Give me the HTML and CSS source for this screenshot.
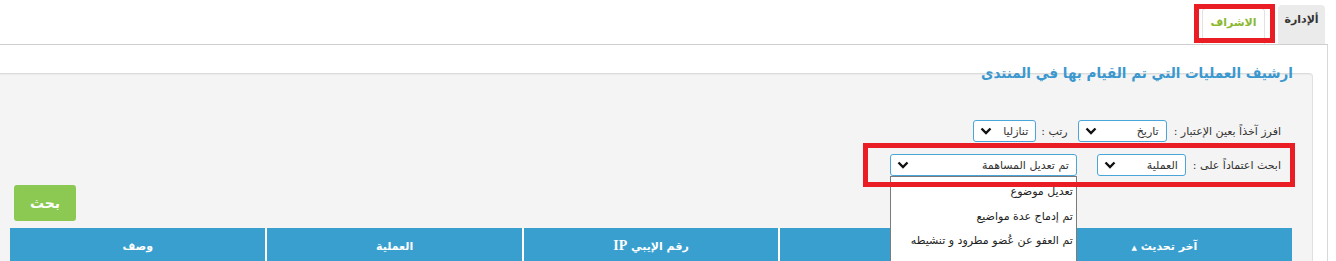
FILE: index.html
```html
<!DOCTYPE html>
<html lang="ar" dir="rtl">
<head>
  <meta charset="UTF-8">
  <title>ارشيف العمليات</title>
  <meta name="viewport" content="width=device-width,initial-scale=1">
  <link rel="stylesheet" href="styles.css">
</head>
<body>
  <!-- Tabs -->
  <div class="tabs">
    <a class="tab">ألإدارة</a>
    <a class="tab active">الاشراف</a>
  </div>

  <div class="main">
    <div class="panel">
      <h2>ارشيف العمليات التي تم القيام بها في المنتدى</h2>

      <div class="filters">
        <div class="row">
          <label>افرز آخذاً بعين الإعتبار :</label>
          <div class="sel w89"><span>تاريخ</span><svg viewBox="0 0 12 8"><path d="M1.5 1.5 6 6 10.5 1.5"/></svg></div>
          <label class="lbl-sort">رتب :</label>
          <div class="sel w63"><span>تنازليا</span><svg viewBox="0 0 12 8"><path d="M1.5 1.5 6 6 10.5 1.5"/></svg></div>
        </div>
        <div class="row marked">
          <label>ابحث اعتماداً على :</label>
          <div class="sel w89"><span>العملية</span><svg viewBox="0 0 12 8"><path d="M1.5 1.5 6 6 10.5 1.5"/></svg></div>
          <div class="sel w187 open">
            <span>تم تعديل المساهمة</span><svg viewBox="0 0 12 8"><path d="M1.5 1.5 6 6 10.5 1.5"/></svg>
            <ul class="options">
              <li>تعديل موضوع</li>
              <li>تم إدماج عدة مواضيع</li>
              <li>تم العفو عن عُضو مطرود و تنشيطه</li>
              <li>تم تعديل المساهمة</li>
            </ul>
          </div>
        </div>
      </div>

      <div class="actions"><button>بحث</button></div>

      <table class="log">
        <thead>
          <tr>
            <th>آخر تحديث <small>▲</small></th>
            <th>العضو</th>
            <th>رقم الإيبي <b>IP</b></th>
            <th>العملية</th>
            <th>وصف</th>
          </tr>
        </thead>
      </table>
    </div>
  </div>
</body>
</html>
```

FILE: styles.css
```css
:root {
  --blue: #389fcf;
  --title: #3b98cf;
  --green: #8bc953;
  --mark: #ea1c24;
  --panel: #f4f4f4;
  --line: #cfcfcf;
}
* { box-sizing: border-box; margin: 0; padding: 0; }
html, body { height: 100%; overflow: hidden; }
body {
  font-family: "DejaVu Sans", sans-serif;
  font-size: 11px; color: #333; background: #fff;
  direction: rtl;
}

/* tabs */
.tabs {
  height: 44px; display: flex; align-items: flex-end;
  padding-right: 11px;
}
.tab {
  display: block; font-weight: bold; font-size: 11px;
  text-align: center; border-radius: 4px 4px 0 0;
}
.tab:first-child {
  width: 47px; height: 39px; line-height: 30px;
  background: #ebebeb; color: #333;
}
.tab.active {
  position: relative;
  width: 63px; height: 36px; line-height: 28px; margin-right: 13px;
  background: #fff; color: #8ab82f;
  border: 1px solid #e2e2e2; border-bottom: none;
}
.tab.active::after {
  content: ""; position: absolute;
  top: -5px; bottom: 1px; left: -9px; right: -11px;
  border: 5px solid var(--mark);
}

/* main area */
.main {
  border-top: 1px solid var(--line);
  border-right: 1px solid #d8d8d8;
  margin-right: 8px;
  padding-top: 28px; padding-right: 14px;
  height: 300px;
}
.panel {
  background: var(--panel);
  border-top: 1px solid #dcdcdc; border-right: 1px solid #e0e0e0;
  border-top-right-radius: 4px;
  box-shadow: 0 1px 0 #ebebeb inset;
  height: 300px;
}
.panel h2 {
  font-family: "DejaVu Sans Condensed", "DejaVu Sans", sans-serif;
  font-size: 15px; line-height: 22px; font-weight: bold;
  color: var(--title);
  margin-top: -12px; padding-right: 19px;
}

/* filter rows */
.filters { margin-top: 36px; padding-right: 31px; }
.row {
  display: flex; align-items: center;
  width: fit-content; height: 22px;
}
.row + .row { margin-top: 12px; }
.row label { white-space: nowrap; margin-left: 7px; }
.row .lbl-sort { margin: 0 10px 0 5px; }
.row.marked { position: relative; }
.row.marked::after {
  content: ""; position: absolute; z-index: 5;
  top: -11px; bottom: -11px; right: -14px; left: -27px;
  border: 5px solid var(--mark);
}
.sel {
  position: relative;
  display: flex; align-items: center; justify-content: space-between;
  height: 22px; padding: 0 7px 0 6px;
  background: #fff; border: 1px solid #4aa6d8; border-radius: 3px;
  color: #333; white-space: nowrap;
}
.sel svg {
  width: 12px; height: 8px;
  fill: none; stroke: #111; stroke-width: 2.4;
}
.sel + .sel { margin-right: 20px; }
.w89 { width: 89px; }
.w63 { width: 63px; }
.w187 { width: 187px; }

/* open dropdown */
.options {
  list-style: none; position: absolute; z-index: 4;
  top: 21px; right: -1px; left: -1px; height: 120px;
  background: #fff; border: 1px solid #7b7b7b;
  padding-top: 3px;
}
.options li {
  height: 24.5px; line-height: 24.5px;
  padding-right: 3px; color: #222;
}

/* search button */
.actions { text-align: left; padding-left: 14px; margin-top: 9px; }
.actions button {
  width: 62px; height: 36px; border: none; border-radius: 3px;
  background: var(--green); color: #fff;
  font-family: inherit; font-size: 14px; font-weight: bold;
  cursor: pointer;
}

/* table */
.log {
  width: 1282px; margin: 7px 20px 0 0;
  border-collapse: collapse; table-layout: fixed;
}
.log th {
  height: 34px; background: var(--blue); color: #fff;
  font-size: 11px; font-weight: bold; padding-top: 2px;
  border-left: 2px solid #fff;
}
.log th:last-child { border-left: none; }
.log th small { font-size: 7px; }
.log th b { font-family: "Liberation Serif", serif; font-size: 14px; }
```
